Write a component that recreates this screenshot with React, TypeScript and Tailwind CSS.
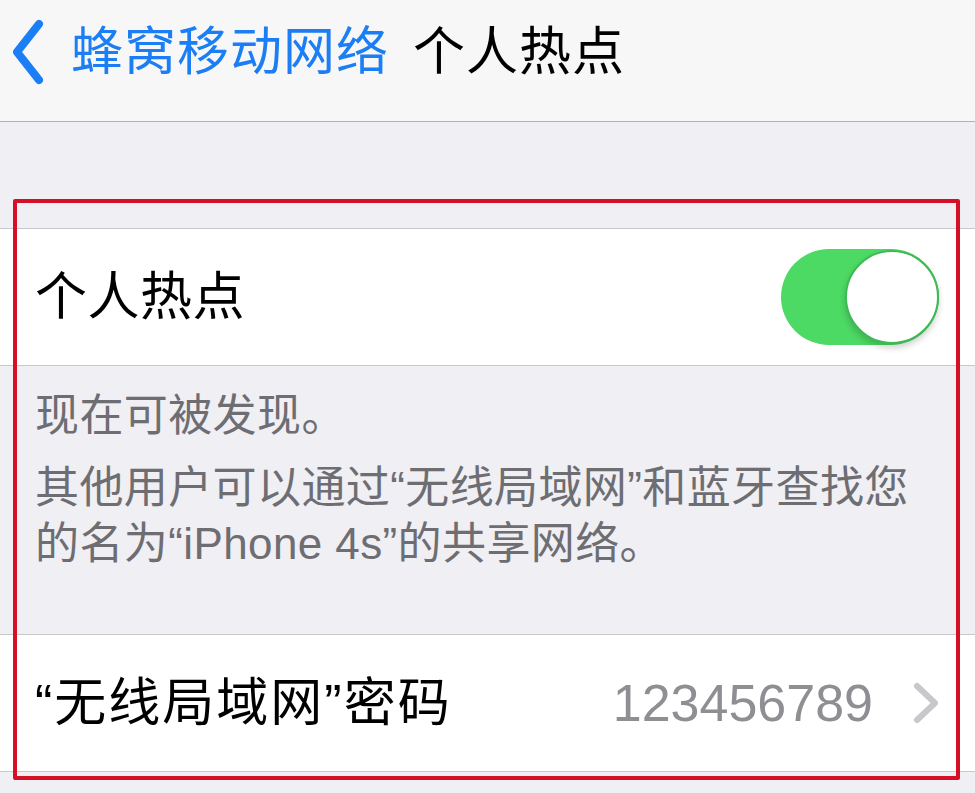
import React from 'react';

const font = { fontFamily: '"Liberation Sans", "Noto Sans CJK SC", sans-serif' };

const Toggle: React.FC = () => (
  <div className="w-[158px] h-[96px] rounded-full bg-[#4cd964] flex items-center justify-end">
    <div className="w-[94px] h-[94px] rounded-full bg-white border-[2px] border-[#3fb955] shadow-[0_4px_6px_rgba(0,0,0,0.18)]" />
  </div>
);

export default function App() {
  return (
    <div className="relative w-[975px] h-[793px] overflow-hidden bg-[#efeff4]" style={font}>
      {/* nav bar */}
      <div className="h-[122px] bg-[#f7f7f8] border-b border-[#b2b2b2] flex items-center pl-[11px] pb-[18px]">
        <svg width="34" height="66" viewBox="0 0 34 66" className="mr-[26px]">
          <polyline points="28,5 6,33 28,61" fill="none" stroke="#1b7ef4" strokeWidth="8" strokeLinecap="round" strokeLinejoin="round" />
        </svg>
        <span className="text-[52px] leading-[60px] text-[#1b7ef4] tracking-[1px]">蜂窝移动网络</span>
        <span className="text-[52px] leading-[60px] text-black ml-[24px] tracking-[1px]">个人热点</span>
      </div>

      <div className="h-[106px]" />

      {/* hotspot switch */}
      <div className="h-[138px] bg-white border-y border-[#c8c7cc] flex items-center justify-between pl-[35px] pr-[36px]">
        <span className="text-[52px] leading-[60px] text-black tracking-[0.5px]">个人热点</span>
        <Toggle />
      </div>

      {/* footer */}
      <div className="h-[268px] pl-[35px] pt-[22px] text-[44px] leading-[56px] text-[#6d6d72] tracking-[0.4px]">
        <div className="mb-[16px]">现在可被发现。</div>
        <div>其他用户可以通过“无线局域网”和蓝牙查找您</div>
        <div>的名为“iPhone 4s”的共享网络。</div>
      </div>

      {/* password */}
      <div className="h-[138px] bg-white border-y border-[#c8c7cc] flex items-center pl-[35px] pr-[34px]">
        <span className="text-[52px] leading-[60px] text-black tracking-[2px]">“无线局域网”密码</span>
        <span className="ml-auto text-[52px] leading-[60px] text-[#8e8e93]">123456789</span>
        <svg width="30" height="42" viewBox="0 0 30 42" className="ml-[38px]">
          <polyline points="6,4 24,21 6,38" fill="none" stroke="#c7c7cc" strokeWidth="6" strokeLinecap="round" strokeLinejoin="round" />
        </svg>
      </div>

      {/* red highlight box */}
      <div className="absolute left-[13px] top-[199px] w-[947px] h-[581px] border-[4px] border-[#d50f25] rounded-[2px] pointer-events-none" />
    </div>
  );
}
